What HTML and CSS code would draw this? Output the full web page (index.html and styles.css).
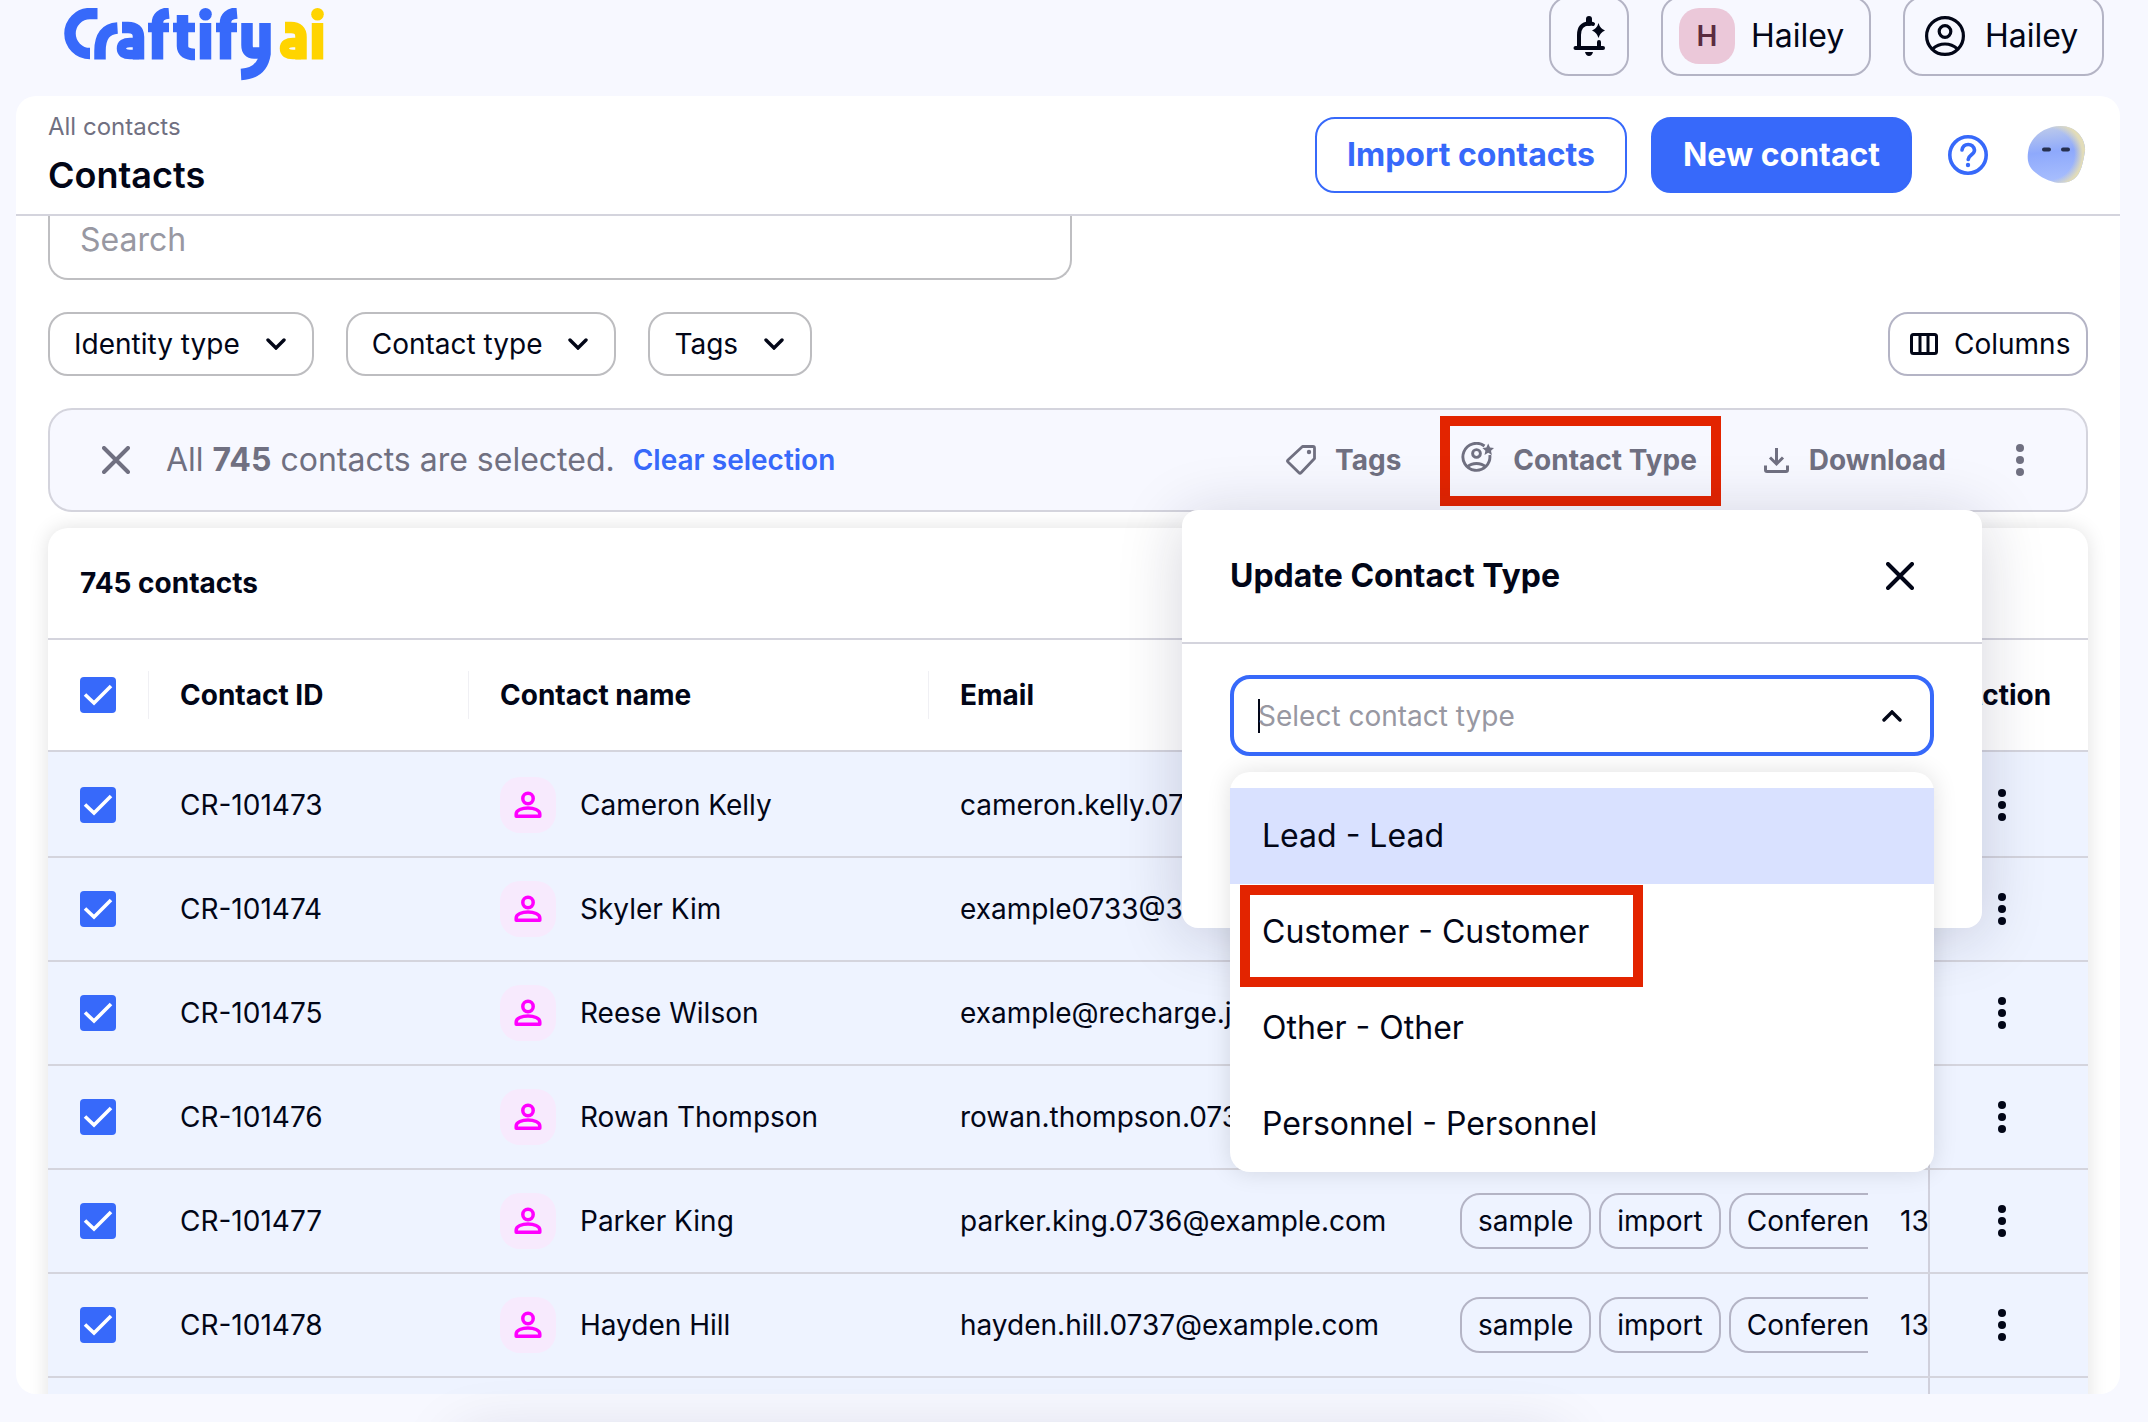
FILE: index.html
```html
<!DOCTYPE html>
<html lang="en">
  <head>
    <meta charset="UTF-8" />
    <meta name="viewport" content="width=device-width, initial-scale=1.0" />
    <title>Contacts</title>
    <link rel="stylesheet" href="styles.css">
  </head>
  <body>
    <svg class="sprite">
      <symbol id="check" viewBox="0 0 36 36">
        <path d="M5 17.5l9 8.500L31 9" fill="none" stroke="#fff" stroke-width="3.6" />
      </symbol>
      <symbol id="person" viewBox="0 0 28 28">
        <circle cx="14" cy="7.500" r="5.200" fill="none" stroke="#f0f" stroke-width="3.500" />
        <path d="M2.200 25.300v-2.300c0-4 6-6 11.800-6s11.800 2 11.800 6v2.300z" fill="none" stroke="#f0f" stroke-width="3.500" stroke-linejoin="round" />
      </symbol>
      <symbol id="dots" viewBox="0 0 10 34">
        <circle cx="5" cy="5" r="4" /><circle cx="5" cy="17" r="4" /><circle cx="5" cy="29" r="4" />
      </symbol>
      <symbol id="chevron" viewBox="0 0 20 12">
        <path d="M2 2l8 8 8-8" fill="none" stroke="currentColor" stroke-width="3.4" stroke-linecap="round" />
      </symbol>
      <symbol id="close" viewBox="0 0 28 28">
        <path d="M2 2l24 24M26 2L2 26" fill="none" stroke="currentColor" stroke-width="4" stroke-linecap="round" />
      </symbol>
    </svg>

    <header class="topbar">
      <!-- Brand mark -->
      <svg class="logo" viewBox="0 0 262 74" fill="none" stroke="#3769fa" stroke-width="11.500">
        <path d="M33.500 5.600H26a20 20 0 0 0 0 40" />
        <path d="M36 51.500V43Q36 21 53.500 20" />
        <path d="M58 19.500H64Q74.500 19.500 74.500 29V51.500" />
        <path d="M75 34.500H66Q57.500 34.500 57.500 40.500T66 46.500H75" stroke-width="9.500" />
        <path d="M93.500 51.500V15Q93.500 6 105 5" />
        <path d="M84 19.500h21" stroke-width="9.500" />
        <path d="M118.500 7V38Q118.500 46.500 131 46.500" />
        <path d="M109 19.500h22" stroke-width="9.500" />
        <path d="M141.500 15v36.500" />
        <circle cx="141.500" cy="6.300" r="6.300" fill="#3769fa" stroke="none" />
        <path d="M161.500 51.500V15Q161.500 6 173 5" />
        <path d="M152 19.500h21" stroke-width="9.500" />
        <path d="M183 15V37Q183 45 190 45H201" />
        <path d="M201 15V46Q198 65.500 177 66.500" />
        <g stroke="#ffd400">
          <path d="M221 19.500H227Q237 19.500 237 29V51.500" />
          <path d="M237 34.500H229Q220.500 34.500 220.500 40.500T229 46.500H237" stroke-width="9.500" />
          <path d="M253.500 15v36.500" />
          <circle cx="253.500" cy="6.300" r="6.300" fill="#ffd400" stroke="none" />
        </g>
      </svg>
      <div class="topbar-actions">
        <button class="top-btn bell">
          <svg width="32" height="42" viewBox="0 0 32 42">
            <path d="M6 33V20Q6 9 16 8.500Q18.500 8.300 20 9M26 27v6" fill="none" stroke="#020617" stroke-width="4" stroke-linecap="round" />
            <path d="M2.500 33h27.500" stroke="#020617" stroke-width="4" stroke-linecap="round" />
            <path d="M16 4v4" stroke="#020617" stroke-width="6" stroke-linecap="round" />
            <path d="M12 37h8q-1 4-4 4t-4-4zM25.500 8q1.500 5.500 6.500 7.500q-5 2-6.500 7.500q-1.500-5.500-6.500-7.500q5-2 6.500-7.500z" fill="#020617" />
          </svg>
        </button>
        <button class="top-btn workspace"><span class="initial">H</span><span class="user">Hailey</span></button>
        <button class="top-btn account">
          <svg width="40" height="40" viewBox="0 0 40 40" fill="none" stroke="#020617" stroke-width="3.200">
            <circle cx="20" cy="20" r="18.400" /><circle cx="20" cy="15.500" r="5.800" />
            <path d="M7.500 33q5.500-5 12.500-5t12.500 5" />
          </svg>
          <span class="user">Hailey</span>
        </button>
      </div>
    </header>

    <main class="panel">
      <div class="page-head">
        <div class="titles">
          <p class="crumb">All contacts</p>
          <h1>Contacts</h1>
        </div>
        <button class="btn btn-outline">Import contacts</button>
        <button class="btn btn-primary">New contact</button>
        <svg class="help" width="40" height="40" viewBox="0 0 40 40" fill="none" stroke="#3769fa" stroke-width="3.600">
          <circle cx="20" cy="20" r="18.200" />
          <path d="M14 15q1-5.500 6.200-5.500t6.300 5.500q0 2.600-3 4.800t-3.300 4.700" stroke-linecap="round" />
          <circle cx="20" cy="30" r="2.200" fill="#3769fa" stroke="none" />
        </svg>
        <svg class="face" width="60" height="60" viewBox="0 0 60 60">
          <defs>
            <linearGradient id="skin" x1=".4" y1="0" x2=".5" y2="1">
              <stop offset="0" stop-color="#bdcaea" /><stop offset=".45" stop-color="#8ea9fc" /><stop offset="1" stop-color="#a9bffd" />
            </linearGradient>
            <radialGradient id="edge" cx=".36" cy=".5" r=".6">
              <stop offset=".75" stop-color="#e2dcb8" stop-opacity="0" /><stop offset="1" stop-color="#e2dcb8" />
            </radialGradient>
          </defs>
          <path d="M3 22C7 10 20 1 35 1C50 1 60 14 59 26C57 38 55 49 48 54C38 61 22 58 10 48C0 41 1 31 3 22z" fill="url(#skin)" />
          <path d="M3 22C7 10 20 1 35 1C50 1 60 14 59 26C57 38 55 49 48 54C38 61 22 58 10 48C0 41 1 31 3 22z" fill="url(#edge)" />
          <path d="M18 24.500h5M37 24.500h5" stroke="#27304f" stroke-width="4" stroke-linecap="round" />
        </svg>
      </div>

      <div class="content">
        <div class="search">Search</div>

        <div class="filters">
          <button class="filter">Identity type <svg class="chev"><use href="#chevron" /></svg></button>
          <button class="filter">Contact type <svg class="chev"><use href="#chevron" /></svg></button>
          <button class="filter">Tags <svg class="chev"><use href="#chevron" /></svg></button>
          <button class="filter columns">
            <svg width="28" height="22" viewBox="0 0 28 22" fill="none" stroke="#020617" stroke-width="3">
              <rect x="1.500" y="1.500" width="25" height="19" rx="2" /><path d="M10 1v20M18 1v20" />
            </svg>
            Columns
          </button>
        </div>

        <div class="selection-bar">
          <svg class="clear-x"><use href="#close" /></svg>
          <span class="selected-text">All <b>745</b> contacts are selected.</span>
          <a class="clear-link">Clear selection</a>
          <div class="bulk">
            <button class="bulk-btn tags-btn">
              <svg width="30" height="30" viewBox="0 0 30 30" fill="none" stroke="currentColor" stroke-width="2.800" stroke-linejoin="round">
                <path d="M16.500 1.500H27Q28.500 1.500 28.500 3V13.500L15 27.700Q14 29 13 27.700L2 17Q1 16 2 15z" />
                <circle cx="23" cy="7" r="2.200" fill="currentColor" stroke="none" />
              </svg>
              Tags
            </button>
            <button class="bulk-btn type-btn">
              <svg width="33" height="32" viewBox="0 0 33 32" fill="none" stroke="currentColor" stroke-width="2.900">
                <path d="M23.500 4A13.500 13.500 0 1 0 28.800 13" /><circle cx="15.500" cy="11.500" r="3.900" />
                <path d="M6 25q4-3.500 9.500-3.500T25 25" />
                <path d="M27.200 1.500l1.800 4 4 .4-3 2.900.9 4.200-3.700-2.200-3.700 2.200.9-4.200-3-2.900 4-.4z" fill="currentColor" stroke="none" />
              </svg>
              Contact Type
            </button>
            <button class="bulk-btn download-btn">
              <svg width="26" height="26" viewBox="0 0 26 26" fill="none" stroke="currentColor" stroke-width="3">
                <path d="M12.500 1v15M6 10.500l6.500 6.500 6.500-6.500M1.500 18.500v4.500q0 1.500 1.500 1.500h19q1.500 0 1.500-1.500v-4.500" />
              </svg>
              Download
            </button>
            <svg class="dots"><use href="#dots" /></svg>
          </div>
          <div class="highlight highlight-type"></div>
        </div>

        <section class="table">
          <div class="count">745 contacts</div>
          <div class="row head">
            <div class="cell c-check"><svg class="checkbox"><use href="#check" /></svg></div>
            <div class="cell c-id">Contact ID</div>
            <div class="cell c-name">Contact name</div>
            <div class="cell c-email">Email</div>
            <div class="cell c-tags"></div>
            <div class="cell c-phone"></div>
            <div class="cell c-action">Action</div>
          </div>
          <div id="rows"></div>
        </section>
      </div>
    </main>

    <div class="popover">
      <div class="popover-head">
        <h2>Update Contact Type</h2>
        <svg class="popover-close"><use href="#close" /></svg>
      </div>
      <div class="popover-body">
        <div class="select">
          <span class="placeholder">Select contact type</span>
          <svg class="chev up"><use href="#chevron" /></svg>
        </div>
        <div class="menu">
          <div class="option active">Lead - Lead</div>
          <div class="option">Customer - Customer<div class="highlight highlight-option"></div></div>
          <div class="option">Other - Other</div>
          <div class="option">Personnel - Personnel</div>
        </div>
      </div>
    </div>
    <div class="bottom-shadow"></div>

    <script>
      const contacts = [
        ["CR-101473", "Cameron Kelly", "cameron.kelly.0732@example.com"],
        ["CR-101474", "Skyler Kim", "example0733@3.example.com"],
        ["CR-101475", "Reese Wilson", "example@recharge.jp"],
        ["CR-101476", "Rowan Thompson", "rowan.thompson.0735@example.com"],
        ["CR-101477", "Parker King", "parker.king.0736@example.com"],
        ["CR-101478", "Hayden Hill", "hayden.hill.0737@example.com"],
        null,
      ];

      document.getElementById("rows").innerHTML = contacts
        .map((c) => {
          if (!c) {
            return `<div class="row"><div class="cell c-rest"></div><div class="cell c-action"></div></div>`;
          }
          return `
    <div class="row">
      <div class="cell c-check"><svg class="checkbox"><use href="#check" /></svg></div>
      <div class="cell c-id">${c[0]}</div>
      <div class="cell c-name"><span class="avatar"><svg><use href="#person" /></svg></span>${c[1]}</div>
      <div class="cell c-email">${c[2]}</div>
      <div class="cell c-tags"><span class="tag">sample</span><span class="tag">import</span><span class="tag">Conference</span></div>
      <div class="cell c-phone">13</div>
      <div class="cell c-action"><svg class="dots"><use href="#dots" /></svg></div>
    </div>`;
        })
        .join("");
    </script>
  </body>
</html>
```
FILE: styles.css
```css
* {
  box-sizing: border-box;
}

html {
  overflow: hidden;
}

body {
  position: relative;
  width: 2148px;
  height: 1422px;
  margin: 0;
  overflow: hidden;
  background-color: #f7f8ff;
  color: #020617;
  font-family: Inter, sans-serif;
  font-size: 28px;
}

button {
  font-family: inherit;
  color: inherit;
  background: none;
  padding: 0;
}

h1,
h2,
p {
  margin: 0;
}

.sprite {
  display: none;
}

.topbar {
  display: flex;
  justify-content: space-between;
  height: 96px;
  padding: 0 44px 0 64px;
}

.logo {
  width: 262px;
  height: 74px;
  margin-top: 8px;
}

.topbar-actions {
  display: flex;
  gap: 32px;
  margin-top: -4px;
}

.top-btn {
  display: flex;
  align-items: center;
  height: 80px;
  border: 2px solid #b4b4c5;
  border-radius: 20px;
  font-size: 32px;
}

.user {
  padding-bottom: 2px;
}

.bell {
  width: 80px;
  justify-content: center;
}

.workspace {
  width: 210px;
  padding-left: 16px;
}

.account {
  width: 201px;
  padding-left: 20px;
  gap: 20px;
}

.initial {
  width: 56px;
  height: 56px;
  margin-right: 16px;
  border-radius: 20px;
  background-color: #ebc8d9;
  color: #5a2c40;
  font-size: 28px;
  font-weight: 600;
  line-height: 56px;
  text-align: center;
}

.panel {
  width: 2104px;
  height: 1298px;
  margin-left: 16px;
  overflow: hidden;
  background-color: #fff;
  border-radius: 20px;
}

.page-head {
  display: flex;
  align-items: center;
  height: 120px;
  padding: 0 34px 0 32px;
  border-bottom: 2px solid #d4d4dd;
}

.titles {
  flex: 1;
  padding-bottom: 5px;
}

.crumb {
  color: #707081;
  font-size: 24px;
  line-height: 32px;
}

h1 {
  margin-top: 12px;
  font-size: 36px;
  font-weight: 600;
  line-height: 40px;
}

.btn {
  height: 76px;
  padding-bottom: 1px;
  border: 2px solid #3769fa;
  border-radius: 20px;
  font-size: 32px;
  font-weight: 700;
}

.btn-outline {
  width: 312px;
  margin-right: 24px;
  color: #3769fa;
}

.btn-primary {
  width: 261px;
  background-color: #3769fa;
  color: #fff;
}

.help {
  margin: 0 38px 0 36px;
}

.content {
  padding: 0 32px;
}

.search {
  width: 1024px;
  height: 64px;
  padding-left: 30px;
  border: 2px solid #bfbfc2;
  border-top: none;
  border-radius: 0 0 20px 20px;
  color: #9898a2;
  font-size: 32px;
  line-height: 47px;
}

.filters {
  display: flex;
  gap: 32px;
  margin-top: 32px;
}

.filter {
  display: flex;
  align-items: center;
  justify-content: space-between;
  height: 64px;
  padding: 0 26px 0 24px;
  border: 2px solid #bdbdc0;
  border-radius: 20px;
  font-size: 28px;
  gap: 26px;
}

.chev {
  width: 20px;
  height: 12px;
}

.columns {
  width: 200px;
  margin-left: auto;
  padding: 0 0 0 20px;
  justify-content: flex-start;
  gap: 16px;
  border-color: #b4b4c5;
}

.selection-bar {
  position: relative;
  display: flex;
  align-items: center;
  height: 104px;
  margin-top: 32px;
  padding: 0 61px 0 52px;
  border: 2px solid #d4d4dd;
  border-radius: 24px;
  background-color: #f7f8ff;
  color: #707081;
}

.clear-x {
  width: 28px;
  height: 28px;
  margin-right: 36px;
}

.selected-text {
  padding-bottom: 1px;
  font-size: 32px;
}

.clear-link {
  margin-left: 18px;
  color: #3769fa;
  font-weight: 600;
}

.bulk {
  display: flex;
  align-items: center;
  margin-left: auto;
}

.bulk-btn {
  display: flex;
  align-items: center;
  border: none;
  gap: 19px;
  font-size: 28px;
  font-weight: 700;
}

.tags-btn {
  margin-right: 60px;
}

.type-btn {
  margin-right: 67px;
}

.type-btn svg {
  margin-bottom: 5px;
}

.download-btn {
  margin-right: 69px;
}

.bulk .dots {
  fill: #707081;
}

.dots {
  width: 10px;
  height: 34px;
  fill: #020617;
}

.highlight {
  position: absolute;
  border: 10px solid #e32400;
}

.highlight-type {
  left: 1390px;
  top: 6px;
  width: 281px;
  height: 90px;
}

.table {
  margin-top: 16px;
  height: 900px;
  border-radius: 20px 20px 0 0;
  box-shadow: 0 0 20px rgba(0, 0, 0, 0.12);
  background-color: #fff;
}

.count {
  height: 112px;
  padding-left: 32px;
  border-bottom: 2px solid #d4d4dd;
  font-weight: 700;
  line-height: 110px;
}

.row {
  display: flex;
  height: 104px;
  border-bottom: 2px solid #d4d4dd;
  background-color: #eef3ff;
}

#rows .row:first-child {
  height: 106px;
  padding-top: 2px;
}

.row.head {
  height: 112px;
  background-color: #fff;
  font-weight: 700;
}

.cell {
  display: flex;
  align-items: center;
  flex: none;
  overflow: hidden;
  white-space: nowrap;
}

.c-check {
  width: 100px;
  padding-left: 32px;
}

.c-id {
  width: 320px;
  padding-left: 32px;
}

.c-name {
  width: 460px;
  padding-left: 32px;
}

.c-email {
  width: 500px;
  padding-left: 32px;
}

.head .c-id,
.head .c-name,
.head .c-email {
  height: 48px;
  margin-top: 31px;
  border-left: 1px solid #f0f0f4;
  padding-left: 31px;
}

.c-tags {
  width: 440px;
  padding-left: 32px;
  gap: 8px;
}

#rows .c-tags {
  width: 408px;
  padding-left: 0;
  margin-left: 32px;
  margin-right: 32px;
}

#rows .c-phone {
  width: 28px;
}

.head .c-tags {
  width: 472px;
}

.head .c-phone {
  width: 28px;
}

.c-rest {
  width: 1880px;
}

.c-action {
  width: 160px;
  padding-right: 14px;
  border-left: 2px solid #d0d0dc;
  justify-content: center;
}

.head .c-action {
  padding-right: 5px;
}

.checkbox {
  width: 36px;
  height: 36px;
  border-radius: 4px;
  background-color: #3769fa;
}

.avatar {
  display: flex;
  align-items: center;
  justify-content: center;
  width: 56px;
  height: 56px;
  margin-right: 24px;
  border-radius: 20px;
  background-color: #f7eafd;
}

.avatar svg {
  width: 28px;
  height: 28px;
}

.tag {
  height: 56px;
  padding: 0 16px;
  border: 2px solid #b4b4c5;
  border-radius: 20px;
  line-height: 52px;
}

.popover {
  position: absolute;
  left: 1182px;
  top: 510px;
  width: 800px;
  height: 418px;
  border-radius: 16px;
  background-color: #fff;
  box-shadow: 0 8px 64px rgba(20, 20, 60, 0.18);
}

.popover-head {
  display: flex;
  align-items: center;
  justify-content: space-between;
  height: 134px;
  padding: 0 68px 0 48px;
  border-bottom: 2px solid #d4d4dd;
}

h2 {
  padding-bottom: 2px;
  font-size: 32px;
  font-weight: 700;
}

.popover-close {
  width: 28px;
  height: 28px;
}

.popover-body {
  padding: 31px 48px;
}

.select {
  display: flex;
  align-items: center;
  justify-content: space-between;
  height: 81px;
  padding: 0 28px 0 24px;
  border: 4px solid #3769fa;
  border-radius: 20px;
}

.placeholder {
  border-left: 2px solid #020617;
  color: #9898a2;
  line-height: 34px;
  text-indent: -2px;
}

.up {
  transform: rotate(180deg);
}

.menu {
  position: relative;
  margin-top: 16px;
  padding-top: 16px;
  border-radius: 20px;
  background-color: #fff;
  box-shadow: 0 0 24px rgba(0, 0, 0, 0.12);
}

.option {
  position: relative;
  height: 96px;
  padding-left: 32px;
  font-size: 32px;
  line-height: 96px;
}

.active {
  background-color: #d9e1ff;
}

.highlight-option {
  left: 10px;
  top: 1px;
  width: 403px;
  height: 102px;
}

.bottom-shadow {
  position: absolute;
  left: 460px;
  bottom: -60px;
  width: 1100px;
  height: 40px;
  box-shadow: 0 0 64px rgba(20, 20, 60, 0.18);
}
```
